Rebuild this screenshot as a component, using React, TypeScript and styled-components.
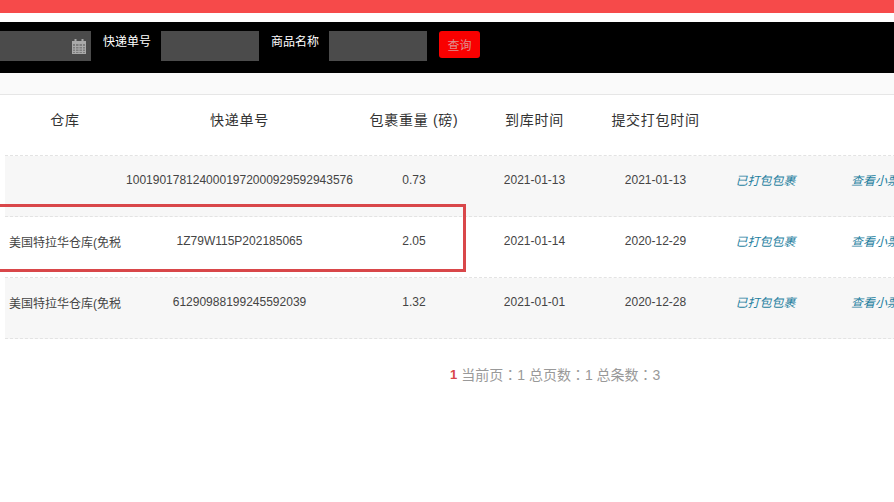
import React from "react";
import styled, { createGlobalStyle } from "styled-components";

const Global = createGlobalStyle`
  html, body {
    margin: 0;
    padding: 0;
    background: #fff;
    overflow: hidden;
  }
  body {
    font-family: "Liberation Sans", "Noto Sans CJK SC", sans-serif;
    font-size: 12px;
    color: #333;
  }
`;

const Page = styled.div`
  width: 894px;
  height: 502px;
  overflow: hidden;
`;

const TopBar = styled.div`
  height: 13px;
  background: #f64a4a;
  margin-bottom: 9px;
`;

const Toolbar = styled.div`
  height: 51px;
  box-sizing: border-box;
  padding-top: 9px;
  background: #000;
  display: flex;
  align-items: flex-start;
`;

const Field = styled.div<{ $width: number }>`
  width: ${(p) => p.$width}px;
  height: 30px;
  background: #4b4b4b;
  display: flex;
  align-items: center;
  justify-content: flex-end;
  padding-right: 5px;
  box-sizing: border-box;
`;

const Label = styled.label`
  margin: 3px 9px 0 12px;
  color: #fff;
  font-size: 12px;
  line-height: 17px;
  width: 49px;
  white-space: nowrap;
`;

const SearchButton = styled.button`
  margin-left: 12px;
  width: 41px;
  height: 27px;
  padding: 0;
  border: 0;
  border-radius: 3px;
  background: #f90000;
  color: #e08e8e;
  font-family: inherit;
  font-size: 12px;
`;

const Strip = styled.div`
  height: 21px;
  background: #fafafa;
  border-bottom: 1px solid #e6e6e6;
`;

const Table = styled.div`
  position: relative;
  margin-left: 5px;
  width: 931px;
`;

const Row = styled.div<{ $striped?: boolean }>`
  display: grid;
  grid-template-columns: 120px 229px 120px 121px 121px 99px 120px;
  align-items: center;
  box-sizing: border-box;
  height: 61px;
  padding-bottom: 12px;
  border-bottom: 1px dashed #e3e3e3;
  background: ${(p) => (p.$striped ? "#f7f7f7" : "#fff")};
`;

const HeadCell = styled.div`
  text-align: center;
  color: #333;
  font-size: 14px;
  letter-spacing: 0.7px;
  white-space: nowrap;
`;

const Cell = styled.div`
  text-align: center;
  color: #444;
  font-size: 12px;
  white-space: nowrap;
  overflow: hidden;
`;

const LinkCell = styled.a`
  display: block;
  margin-bottom: 2px;
  text-align: center;
  color: #1f7f9f;
  font-size: 12px;
  font-style: italic;
  white-space: nowrap;
`;

const Highlight = styled.div`
  position: absolute;
  left: -10px;
  top: 109px;
  width: 471px;
  height: 68px;
  box-sizing: border-box;
  border: 3px solid #d9474a;
  pointer-events: none;
`;

const Pagination = styled.div`
  display: flex;
  padding: 26px 0 0 450px;
  color: #999;
  font-family: "Liberation Sans", "Noto Sans CJK TC", sans-serif;
  font-size: 14px;
  line-height: 20px;
  white-space: nowrap;
`;

const CurrentPage = styled.b`
  color: #d9474a;
  font-size: 13px;
  margin-right: 4px;
`;

const CalendarIcon = () => (
  <svg width="14" height="15" viewBox="0 0 14 15" fill="none" stroke="#a9a9a9">
    <rect x="0.5" y="2.5" width="13" height="12" fill="#7d7d7d" />
    <rect x="0" y="2" width="14" height="3" fill="#a9a9a9" stroke="none" />
    <path d="M3.5 0v3M10.5 0v3" strokeWidth="2" />
    <path d="M0.5 7.5h13M0.5 10h13M0.5 12.5h13M3.5 5v10M7 5v10M10.5 5v10" strokeWidth="1" />
  </svg>
);

const rows = [
  { store: "", no: "1001901781240001972000929592943576", weight: "0.73", arrive: "2021-01-13", submit: "2021-01-13" },
  { store: "美国特拉华仓库(免税", no: "1Z79W115P202185065", weight: "2.05", arrive: "2021-01-14", submit: "2020-12-29" },
  { store: "美国特拉华仓库(免税", no: "61290988199245592039", weight: "1.32", arrive: "2021-01-01", submit: "2020-12-28" },
];

export default function App() {
  return (
    <Page>
      <Global />
      <TopBar />
      <Toolbar>
        <Field $width={91}>
          <CalendarIcon />
        </Field>
        <Label>快递单号</Label>
        <Field $width={98} />
        <Label>商品名称</Label>
        <Field $width={98} />
        <SearchButton>查询</SearchButton>
      </Toolbar>
      <Strip />
      <Table>
        <Row>
          <HeadCell>仓库</HeadCell>
          <HeadCell>快递单号</HeadCell>
          <HeadCell>包裹重量 (磅)</HeadCell>
          <HeadCell>到库时间</HeadCell>
          <HeadCell>提交打包时间</HeadCell>
          <HeadCell />
          <HeadCell />
        </Row>
        {rows.map((r, i) => (
          <Row key={r.no} $striped={i % 2 === 0}>
            <Cell>{r.store}</Cell>
            <Cell>{r.no}</Cell>
            <Cell>{r.weight}</Cell>
            <Cell>{r.arrive}</Cell>
            <Cell>{r.submit}</Cell>
            <LinkCell>已打包包裹</LinkCell>
            <LinkCell>查看小票</LinkCell>
          </Row>
        ))}
        <Highlight />
      </Table>
      <Pagination>
        <CurrentPage>1</CurrentPage>
        <span>当前页：1 总页数：1 总条数：3</span>
      </Pagination>
    </Page>
  );
}
